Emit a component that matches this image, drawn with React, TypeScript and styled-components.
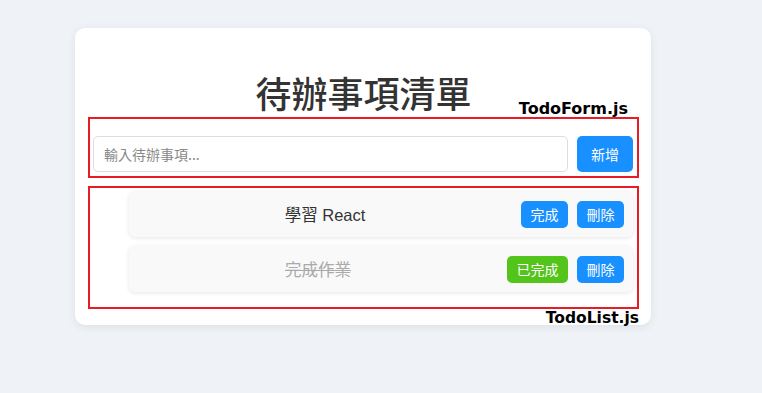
import React from "react";
import styled, { createGlobalStyle } from "styled-components";

const GlobalStyle = createGlobalStyle`
  html, body {
    margin: 0;
    padding: 0;
    background: #eff2f7;
    font-family: "Liberation Sans", "Noto Sans CJK TC", sans-serif;
  }
`;

const SPage = styled.div`
  width: 762px;
  height: 393px;
  padding-top: 28px;
  box-sizing: border-box;
`;

const SCard = styled.div`
  width: 576px;
  margin-left: 75px;
  box-sizing: border-box;
  padding: 44px 12px 16px 13px;
  background: #fff;
  border-radius: 10px;
  box-shadow: 0 2px 10px rgba(0, 0, 0, 0.08);
`;

const STitle = styled.h1`
  margin: 0 0 4px;
  font-family: "Noto Sans CJK TC", sans-serif;
  font-size: 36px;
  line-height: 41px;
  font-weight: 500;
  text-align: center;
  color: #333;
`;

const SBox = styled.div<{ $gap?: number }>`
  position: relative;
  margin-top: ${({ $gap }) => $gap ?? 0}px;
  border: 2px solid #e91c25;
`;

const SLabel = styled.span<{ $top?: boolean }>`
  position: absolute;
  right: ${({ $top }) => ($top ? "9px" : "-2px")};
  ${({ $top }) => ($top ? "top: -19px;" : "bottom: -20px;")}
  font-family: "DejaVu Sans", sans-serif;
  font-weight: bold;
  font-size: ${({ $top }) => ($top ? 16 : 15.5)}px;
  line-height: 18px;
  color: #000;
`;

const SForm = styled.form`
  display: flex;
  gap: 9px;
  padding: 17px 4px 4px 3px;
  margin: 0;
`;

const SInput = styled.input`
  flex: 1;
  height: 36px;
  box-sizing: border-box;
  padding: 0 10px;
  border: 1px solid #ddd;
  border-radius: 5px;
  font-family: "Noto Sans CJK TC", sans-serif;
  font-size: 14px;
  color: #333;
  outline: none;
  &::placeholder {
    color: #888;
  }
`;

const SButton = styled.button<{ $color?: string; $h?: number }>`
  height: ${({ $h }) => $h ?? 27}px;
  padding: 0 9.5px;
  border: none;
  border-radius: 5px;
  background: ${({ $color }) => $color ?? "#1890ff"};
  color: #fff;
  font-family: "Noto Sans CJK TC", sans-serif;
  font-size: 14px;
  line-height: 1;
  cursor: pointer;
`;

const SAddButton = styled(SButton)`
  width: 56px;
  padding: 0;
`;

const SList = styled.ul`
  list-style: none;
  margin: 0;
  display: flex;
  flex-direction: column;
  gap: 9px;
  padding: 3px 4px 15px 39px;
`;

const SItem = styled.li`
  display: flex;
  align-items: center;
  gap: 9px;
  height: 46px;
  padding: 0 9px;
  background: #f9f9f9;
  border-radius: 6px;
  box-shadow: 0 1px 4px rgba(0, 0, 0, 0.1);
`;

const SText = styled.span<{ $done?: boolean }>`
  flex: 1;
  text-align: center;
  font-family: "Liberation Sans", "Noto Sans CJK TC", sans-serif;
  font-size: 16.5px;
  color: ${({ $done }) => ($done ? "#aaa" : "#333")};
  text-decoration: ${({ $done }) => ($done ? "line-through" : "none")};
`;

const todos = [
  { id: 1, text: "學習 React", done: false },
  { id: 2, text: "完成作業", done: true },
];

export default function App() {
  return (
    <>
      <GlobalStyle />
      <SPage>
        <SCard>
          <STitle>待辦事項清單</STitle>
          <SBox>
            <SLabel $top>TodoForm.js</SLabel>
            <SForm onSubmit={(e) => e.preventDefault()}>
              <SInput placeholder="輸入待辦事項..." />
              <SAddButton $h={36}>新增</SAddButton>
            </SForm>
          </SBox>
          <SBox $gap={8}>
            <SList>
              {todos.map((t) => (
                <SItem key={t.id}>
                  <SText $done={t.done}>{t.text}</SText>
                  <SButton $color={t.done ? "#52c41a" : "#1890ff"}>
                    {t.done ? "已完成" : "完成"}
                  </SButton>
                  <SButton>刪除</SButton>
                </SItem>
              ))}
            </SList>
            <SLabel>TodoList.js</SLabel>
          </SBox>
        </SCard>
      </SPage>
    </>
  );
}
